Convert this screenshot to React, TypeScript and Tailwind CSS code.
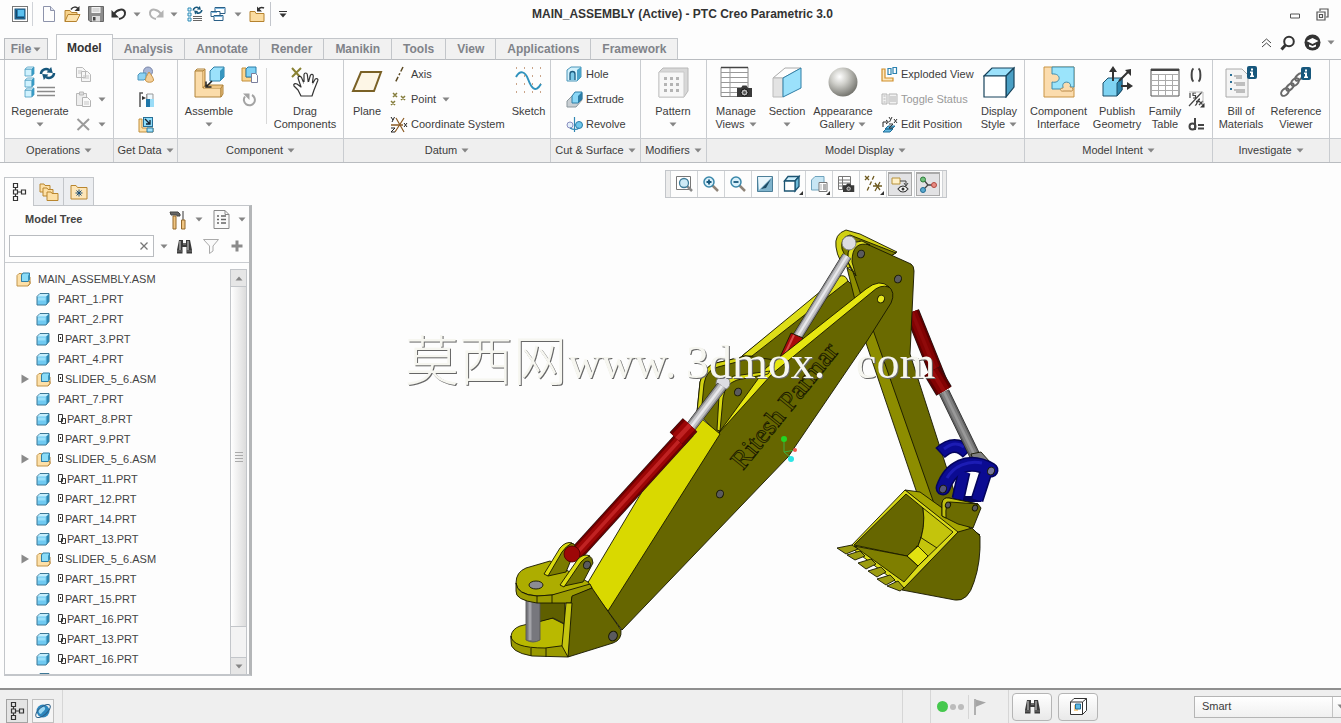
import type { ReactNode } from "react";
import { clsx } from "clsx";

type IconProps = { w?: number; h?: number; children: ReactNode };

function Icon({ w = 16, h, children }: IconProps) {
  const height = h ?? w;
  return (
    <svg width={w} height={height} viewBox={`0 0 ${w} ${height}`} fill="none" className="shrink-0" aria-hidden="true">
      {children}
    </svg>
  );
}

function Caret({ dark = false }: { dark?: boolean }) {
  return (
    <svg width="8" height="5" viewBox="0 0 8 5" className={clsx("shrink-0", dark ? "text-[#333]" : "text-[#858585]")} aria-hidden="true">
      <path d="M0.5 0.5h7L4 4.5z" fill="currentColor" />
    </svg>
  );
}

/* ---------- shared glyph parts ---------- */

function Cube({ x = 0, y = 0, s = 10 }: { x?: number; y?: number; s?: number }) {
  const d = s * 0.25;
  return (
    <g transform={`translate(${x} ${y})`} stroke="#4a9cc0" strokeWidth="0.8" strokeLinejoin="round">
      <path d={`M0 ${d}L${d} 0H${s}L${s - d} ${d}z`} fill="#e4f8ff" />
      <path d={`M${s} 0V${s - d}L${s - d} ${s}V${d}z`} fill="#2f9ac8" />
      <path d={`M0 ${d}H${s - d}V${s}H0z`} fill="#d0f2fe" />
    </g>
  );
}

const partIcon = (
  <Icon w={14}>
    <path d="M1 4.500L4 1.500h9v8l-3 3.500H1z" fill="#6fc9f1" stroke="#3d7896" />
    <path d="M1.500 4.500L4 2h8.500l-2.500 2.500z" fill="#c3edfc" />
    <path d="M10.500 4.500L13 2v7.300l-2.500 3z" fill="#2f87b0" />
    <path d="M2 5.500h7.500v3H2z" fill="#9be0fa" />
  </Icon>
);

const asmIcon = (
  <Icon w={15}>
    <path d="M1 3.500L3 1.500h2.500v8h8.500v2l-2 2.500H1z" fill="#fde0a8" stroke="#c1954c" />
    <path d="M12 14l2-2.500V5" stroke="#b98a3c" />
    <path d="M5.500 3L7 1h6.500v6.500L12 9.500H5.500z" fill="#8adcf8" stroke="#2f7ea6" />
    <path d="M12 3.500l1.500-2V7.500L12 9z" fill="#3a93bb" />
  </Icon>
);

const arrowsGlyph = (
  <g stroke="#17577c" strokeWidth="2.500">
    <path d="M2 7a5 5 0 0 1 8-4" />
    <path d="M15 6a5 5 0 0 1-8 4" />
    <path d="M10 0v7l5-3.500z" fill="#17577c" stroke="none" transform="rotate(40 11 3)" />
    <path d="M7 6v7l-5-3.500z" fill="#17577c" stroke="none" transform="rotate(40 6 10)" />
  </g>
);

const infoGlyph = (
  <g>
    <rect width="10" height="13" rx="2" fill="#17577c" />
    <path d="M4 2.500h2v2H4zM3 5.500h3v4h1v1.500H3V9.500h1V7H3z" fill="#fff" />
  </g>
);

const binoculars = (
  <Icon w={17}>
    <path d="M3 2h4v3h3V2h4l1 5 1 5v3.500h-5.500V9h-4v6.500H1V12l1-5z" fill="#3b3b3b" />
    <path d="M4 3v9M12 3v9" stroke="#a5a5a5" strokeWidth="1.500" />
    <path d="M7 6h3" stroke="#999" />
    <path d="M1 13h5.500M10.500 13H16" stroke="#777" />
  </Icon>
);

const treeGlyph = (
  <Icon w={16} h={20}>
    <path d="M2.500 1.500h4v4h-4zM2.500 8h4v4h-4zM2.500 14.500h4v4h-4zM10.500 8h4v4h-4zM4.500 5.500V8M4.500 12v2.500M6.500 10h4" stroke="#333" strokeWidth="1.200" />
  </Icon>
);

/* ---------- quick access icons ---------- */

const windowIcon = (
  <Icon w={16}>
    <rect x="0.500" y="0.500" width="15" height="15" fill="#fff" stroke="#777" />
    <rect x="3" y="3" width="10" height="10" fill="#2b8fc9" stroke="#1b4f73" />
    <path d="M6 4h6v6H6z" fill="#5cc0ee" />
    <path d="M4.500 4v7.500H12" stroke="#17496b" strokeWidth="1.500" />
  </Icon>
);
const newIcon = (
  <Icon w={16}>
    <path d="M2.500 0.500h7l4 4v11h-11z" fill="#fdfdfd" stroke="#8d93ab" />
    <path d="M9.500 0.500v4h4" fill="#dde1ee" stroke="#8d93ab" />
  </Icon>
);
const openIcon = (
  <Icon w={17}>
    <path d="M1 15.500V4.500h5l1.500 2H13v2" fill="#f7d28b" stroke="#b5822e" />
    <path d="M1 15.500L4 8.500h12l-3.500 7z" fill="#fde3ae" stroke="#b5822e" />
    <path d="M7 3.500c2-3 5-3 7-1" stroke="#333" strokeWidth="1.500" />
    <path d="M15.500 0v5h-5z" fill="#333" />
  </Icon>
);
const saveIcon = (
  <Icon w={16}>
    <path d="M0.500 0.500h15v15H2l-1.500-1.500z" fill="#8d8d8d" stroke="#666" />
    <rect x="3.500" y="1" width="9" height="6" fill="#f4f4f4" />
    <path d="M4.500 3h7M4.500 5h7" stroke="#bbb" />
    <rect x="4" y="10" width="8" height="5.500" fill="#ddd" />
    <rect x="5" y="11" width="2.500" height="3.500" fill="#444" />
  </Icon>
);
const undoIcon = (
  <Icon w={16}>
    <path d="M3 8c3-5 10-6 11-1.500 .5 3.500-2.500 6-6 6.500" stroke="#333" strokeWidth="2" />
    <path d="M0.500 4v7.500H8z" fill="#333" />
  </Icon>
);
const redoIcon = (
  <Icon w={16}>
    <path d="M13 8C10 3 3 2 2 6.500 1.500 10 4.500 12.500 8 13" stroke="#b3b3b3" strokeWidth="2" />
    <path d="M15.500 4v7.500H8z" fill="#b3b3b3" />
  </Icon>
);
const regenSmall = (
  <Icon w={16}>
    <path d="M1 2h3v3H1zM1 7h3v3H1zM1 12h3v3H1z" fill="#d7f3fe" stroke="#2f8ab5" />
    <g transform="translate(5 0) scale(.65)">{arrowsGlyph}</g>
    <path d="M6 10.500h9M6 12.500h9M6 14.500h9" stroke="#666" />
  </Icon>
);
const windowsIcon = (
  <Icon w={16}>
    <path d="M5 1.500h10v6H5z" fill="#fff" stroke="#2b5f86" />
    <path d="M1 5.500h9v5H1zM4 9.500h9v5H4z" fill="#fff" stroke="#2b5f86" />
    <path d="M5 2.500h10M4 10.500h9M1 6.500h6" stroke="#7fb6dc" />
  </Icon>
);
const closeFolder = (
  <Icon w={17}>
    <path d="M1 15.500V5.500h5l1 2h8v8z" fill="#fbdca0" stroke="#b5822e" />
    <path d="M9 3.500c2-2.500 4-2.500 6-1.500" stroke="#333" strokeWidth="1.500" />
    <path d="M8 0.500v5h5z" fill="#333" />
  </Icon>
);

/* ---------- ribbon icons ---------- */

const regenerateIcon = (
  <Icon w={32}>
    <Cube x={1} y={1} s={9} />
    <Cube x={1} y={12} s={9} />
    <Cube x={1} y={22} s={9} />
    <g transform="translate(15 1)">{arrowsGlyph}</g>
    <path d="M13 21.500h18M13 25.500h18M13 29.500h18" stroke="#8a8a8a" strokeWidth="1.500" />
  </Icon>
);
const copyIcon = (
  <Icon w={17}>
    <path d="M1.500 1.500h6l3 3v7h-9zM6.500 5.500h6l3 3v7h-9z" fill="#f7f7f7" stroke="#b9b9b9" />
    <path d="M8 10h6M8 12h6M3 5h4M3 7h3" stroke="#c5c5c5" />
  </Icon>
);
const pasteIcon = (
  <Icon w={17}>
    <path d="M1.500 2.500h10v12h-10z" fill="#eee" stroke="#b9b9b9" />
    <path d="M4.500 1h4v3h-4z" fill="#ddd" stroke="#b9b9b9" />
    <path d="M7.500 6.500h5l3 3v6h-8z" fill="#fafafa" stroke="#b3b3b3" />
    <path d="M9 11h5M9 13h5" stroke="#c5c5c5" />
  </Icon>
);
const deleteIcon = (
  <Icon w={17}>
    <path d="M2.500 3L14 14M14 3L2.500 14" stroke="#9b9b9b" strokeWidth="2" />
  </Icon>
);
const mergeIcon = (
  <Icon w={18}>
    <circle cx="11" cy="5.500" r="4.500" fill="#a9b6d6" stroke="#7a86a8" />
    <path d="M1 9l2-2h6v5l-2 2H1z" fill="#8ed2f2" stroke="#4f97bd" />
    <path d="M12 6c3 4 4.500 6 4.500 8 0 3-8 3-8 0C8.500 12 10 9 12 6z" fill="#f5cf98" stroke="#c79548" />
  </Icon>
);
const importIcon = (
  <Icon w={18}>
    <path d="M3 16V2h3" stroke="#555" strokeWidth="1.500" />
    <path d="M5 5l4 2-4 2z" fill="#333" />
    <path d="M10 3v9" stroke="#333" />
    <path d="M10 3h6v6h-6z" fill="#eef9fe" stroke="#999" />
    <path d="M9 8h5v8H9z" fill="#1f76a8" />
    <path d="M13 8h4v8h-4z" fill="#9adcf7" />
  </Icon>
);
const shrinkIcon = (
  <Icon w={18}>
    <path d="M2 3h3v9h11v4H2z" fill="#fde0a8" stroke="#c18e3a" />
    <rect x="6.500" y="1.500" width="9" height="9" fill="#8fdcf9" stroke="#276f97" />
    <path d="M8 3l5 5M13 4v4H9" stroke="#123" strokeWidth="1.300" />
    <path d="M10 12h6v4h-6z" fill="#a3e3fb" stroke="#2a7da8" />
  </Icon>
);
const assembleIcon = (
  <Icon w={32}>
    <path d="M2 5l2-2h8l-2 2z" fill="#fdeac8" stroke="#b0843c" />
    <path d="M2 5h8v17h18v9H2z" fill="#fbdcaa" stroke="#b0843c" />
    <path d="M10 5l2-2v16l-2 3M10 22l3-3h17l-2 3M30 19v9l-2 3V22" fill="#efc685" stroke="#b0843c" />
    <path d="M17 5l4-4h10v10l-4 4H17z" fill="#9be1fb" stroke="#2f7ea6" />
    <path d="M27 5l4-4v10l-4 4z" fill="#3796bf" />
    <path d="M19 15l-5 5M13 15.500V21h5.500" stroke="#222" strokeWidth="1.500" />
  </Icon>
);
const createIcon = (
  <Icon w={17}>
    <path d="M1 2h4v9h6v4H1z" fill="#fbd58f" stroke="#c18e3a" />
    <path d="M5 3l2-2h8v8l-2 2H5z" fill="#7fd2f5" stroke="#2a7da8" />
    <path d="M10.500 7.500h4l2 2v7h-6z" fill="#fff" stroke="#7b7f9c" />
  </Icon>
);
const repeatIcon = (
  <Icon w={15}>
    <path d="M3 4.500A5.500 5.500 0 1 0 10 3" stroke="#a3a3a3" strokeWidth="2" />
    <path d="M1 1.500h6.500V8z" fill="#a3a3a3" />
  </Icon>
);
const dragIcon = (
  <Icon w={32}>
    <path d="M3 2l9 10M12 2L3 11" stroke="#8a8233" strokeWidth="2" />
    <path d="M12 30l-3-6-4-4c-1-2 1-3 3-2l4 3-3-9c0-2 2.500-2 3.500-.5l2.500 6V8.500c.3-2 3-2 3.300 0l1 8 2-7c.8-2 3-1 3 .5l-1 8 3-5c1.500-1 3 0 2.500 1.500L25 24l-2 6z" fill="#fff" stroke="#333" strokeWidth="1.200" strokeLinejoin="round" />
    <path d="M15.500 16v3M19.300 16v3M23 17l-1 3" stroke="#fff" strokeWidth="2" />
  </Icon>
);
const planeIcon = (
  <Icon w={32}>
    <path d="M10 6h20l-7 19H2z" fill="#fdf6e6" stroke="#7a6126" strokeWidth="2" />
  </Icon>
);
const axisIcon = (
  <Icon w={18}>
    <path d="M13 1L5 17" stroke="#5c4a24" strokeWidth="1.500" strokeDasharray="5 2 2 2" />
  </Icon>
);
const pointIcon = (
  <Icon w={18}>
    <path d="M3 2l4 4M7 2L3 6M11 5l4 4M15 5l-4 4M1 10l4 4M5 10l-4 4" stroke="#857d3c" strokeWidth="1.500" />
  </Icon>
);
const csysIcon = (
  <Icon w={18}>
    <path d="M6 2l8 14M14 2L5 16" stroke="#8b5a22" strokeWidth="1.200" />
    <path d="M1 9h12" stroke="#8b5a22" strokeWidth="1.500" />
    <path d="M1 1l2 3M4.500 1L2 6M1 12h4l-4 4h4M14 7l3 4M17 7l-3 4" stroke="#222" />
  </Icon>
);
const sketchIcon = (
  <Icon w={32}>
    <path d="M3 2h27M3 10h27M3 18h27M3 26h27" stroke="#b98763" strokeWidth="1.500" strokeDasharray="1 7" />
    <path d="M3 11C7 4 12 5 15 13s7 15 13 5" stroke="#2f92bd" strokeWidth="2" />
  </Icon>
);
const holeIcon = (
  <Icon w={17}>
    <path d="M1 4l4-3h10v10l-4 4H1z" fill="#d3f1fc" stroke="#4a95b8" />
    <path d="M11 4l4-3v10l-4 4z" fill="#4ba3c8" />
    <path d="M4 14V8a2.500 2.500 0 0 1 5 0v6" fill="#7cc9e8" stroke="#1d5c80" strokeWidth="1.300" />
  </Icon>
);
const extrudeIcon = (
  <Icon w={17}>
    <path d="M1 16v-6l8-8h7v7l-6 7z" fill="#c9cfd3" stroke="#8b979d" />
    <path d="M6 5l3-4h7v7l-4 4H6z" fill="#8ad7f6" stroke="#2f7ea6" />
    <path d="M12 5l4-4v7l-4 4z" fill="#2d7da6" />
  </Icon>
);
const revolveIcon = (
  <Icon w={17}>
    <ellipse cx="4" cy="9" rx="3" ry="3" fill="#e3effa" stroke="#8a8fc0" />
    <ellipse cx="13" cy="9" rx="3.500" ry="3.500" fill="#6fc6ea" stroke="#2a7da8" />
    <path d="M8.500 1v15M4 12c3 2 7 2 9 0" stroke="#2f86b3" strokeWidth="1.200" />
  </Icon>
);
const patternIcon = (
  <Icon w={32}>
    <path d="M2 6l4-4h25v23l-4 6H2z" fill="#d8d8d8" stroke="#b8b8b8" />
    <path d="M2 6h25v25H2z" fill="#f7f7f7" stroke="#c9c9c9" />
    <path d="M7 11h3v3H7zM13 11h3v3h-3zM19 11h3v3h-3zM7 17h3v3H7zM13 17h3v3h-3zM19 17h3v3h-3zM7 23h3v3H7zM13 23h3v3h-3zM19 23h3v3h-3z" fill="#b4b4b4" />
  </Icon>
);
const cameraGlyph = (
  <g>
    <path d="M0 3h4l1.500-2.500h4L11 3h4v9H0z" fill="#3a3a3a" />
    <circle cx="7.500" cy="7.500" r="3.500" fill="#bbb" stroke="#111" />
    <circle cx="7.500" cy="7.500" r="1.500" fill="#555" />
  </g>
);
const manageViewsIcon = (
  <Icon w={34} h={32}>
    <path d="M2 1.500h27v29H2z" fill="#fff" stroke="#888" />
    <path d="M2 6.500h27M2 11.500h27M2 16.500h27M2 21.500h27M2 26.500h27M11 1v29" stroke="#999" />
    <path d="M2 1.500h27" stroke="#444" strokeWidth="1.500" />
    <g transform="translate(18 19)">{cameraGlyph}</g>
  </Icon>
);
const sectionIcon = (
  <Icon w={32}>
    <path d="M2 12L14 2h16L12 12z" fill="#fdfdfd" stroke="#aaa" />
    <path d="M2 12h10v19H2z" fill="#e3e3e3" stroke="#bbb" />
    <path d="M12 12L30 2v20L12 31z" fill="#9be1fb" stroke="#2f7ea6" />
  </Icon>
);
const sphereIcon = (
  <Icon w={32}>
    <defs>
      <radialGradient id="ball" cx=".38" cy=".32" r=".7">
        <stop offset="0" stopColor="#fff" />
        <stop offset=".4" stopColor="#cfcfca" />
        <stop offset="1" stopColor="#74746e" />
      </radialGradient>
    </defs>
    <circle cx="16" cy="16" r="14.500" fill="url(#ball)" />
  </Icon>
);
const explodedIcon = (
  <Icon w={17}>
    <path d="M1 3h3v9h8v3H1z" fill="#fde6bb" stroke="#cf8f2d" strokeWidth="1.200" />
    <path d="M7 2.500h3v6H7zM12 1.500h3.500v6H12z" fill="#fff" stroke="#2b82b0" strokeWidth="1.200" />
  </Icon>
);
const toggleIcon = (
  <Icon w={17}>
    <path d="M1 3h5v10H1zM8 3h8v10H8z" fill="#f1f1f1" stroke="#b5b5b5" />
    <path d="M2.500 5h2M2.500 8h2M2.500 11h2M10 5v6M12 5v6M14 5v6" stroke="#b5b5b5" />
  </Icon>
);
const editPosIcon = (
  <Icon w={17}>
    <path d="M4 13l3-3h7l-3 3zM2 16l3-3h7l-3 3z" fill="#65b7de" stroke="#1f6f9a" />
    <path d="M2 11V6h4M5 4l2.500 2L5 8" stroke="#222" />
    <path d="M8 1l1.500 2.500M11 1L8.500 6M13 3l3 4M16 3l-3 4M8 8h4l-4 4h4" stroke="#333" />
  </Icon>
);
const displayIcon = (
  <Icon w={32}>
    <path d="M1 10l8-8h22l-8 8z" fill="#9be1fb" stroke="#17435c" strokeWidth="1.200" />
    <path d="M31 2v19l-8 10V10z" fill="#4a9fc4" stroke="#17435c" strokeWidth="1.200" />
    <path d="M1 10h22v21H1z" fill="#fff" stroke="#17435c" strokeWidth="1.200" />
  </Icon>
);
const interfaceIcon = (
  <Icon w={32}>
    <path d="M1 1h30v30H1z" fill="#fbdcae" stroke="#c99444" />
    <path d="M9 1h22v20h-4c3-6-9-7-7 0v2h-11v-7c9 2 10-9 0-8z" fill="#9be4fb" stroke="#3f8cae" />
    <path d="M20 22c-4 0-3 4 1 3h6c4 1 4-4 0-4" fill="#fbdcae" stroke="#b98a4a" />
  </Icon>
);
const publishIcon = (
  <Icon w={32}>
    <path d="M2 17l5-5h14v12l-5 6H2z" fill="#7fd3f2" stroke="#1c4f6b" />
    <path d="M16 17l5-5v12l-5 6z" fill="#2f86ad" stroke="#1c4f6b" />
    <path d="M12 15V4M18 15l9-9M20 20h9" stroke="#333" strokeWidth="2" />
    <path d="M12 0l4 6H8zM30 3v7l-6-6zM32 20l-6 4v-8z" fill="#333" />
  </Icon>
);
const familyIcon = (
  <Icon w={32}>
    <path d="M2 3h28v27H2z" fill="#fff" stroke="#555" />
    <path d="M2 4h28" stroke="#444" strokeWidth="2" />
    <path d="M2 8.500h28M2 14.500h28M2 19.500h28M2 24.500h28M9.500 8v22M16.500 8v22M23.500 8v22" stroke="#aaa" />
  </Icon>
);
const parensIcon = (
  <Icon w={16}>
    <path d="M5.500 1.500C3 3 3 13 5.500 14.500M10.500 1.500C13 3 13 13 10.500 14.500" stroke="#444" strokeWidth="2" />
  </Icon>
);
const paramsIcon = (
  <Icon w={17}>
    <path d="M2 2v5M5 7h2.500V4.500H5V2h3M1 15L14 1" stroke="#444" strokeWidth="1.200" />
    <path d="M7 14c2 1 2-6 5-6M8 10.500h4M11 10l4 4M15 10l-4 4" stroke="#444" strokeWidth="1.300" />
    <path d="M1 1h14v13" stroke="#bbb" />
    <path d="M16.500 12v4.500H12z" fill="#333" />
  </Icon>
);
const relationIcon = (
  <Icon w={17}>
    <path d="M7 2v12" stroke="#444" strokeWidth="2" />
    <circle cx="4.500" cy="10.500" r="3" stroke="#444" strokeWidth="2" />
    <path d="M10 9h6M10 12.500h6" stroke="#444" strokeWidth="2" />
  </Icon>
);
const bomIcon = (
  <Icon w={32}>
    <path d="M1 3h16l6 6v22H1z" fill="#f4f4f4" stroke="#aaa" />
    <path d="M9 10h8M9 17h11M9 24h11M11 12h6M11 19h9M11 26h9" stroke="#888" />
    <path d="M5 8h2v2H5zM5 15h2v2H5zM5 22h2v2H5z" fill="#2b6f96" />
    <g transform="translate(22 0)">{infoGlyph}</g>
  </Icon>
);
const chainIcon = (
  <Icon w={32}>
    <g stroke="#6a6a6a" strokeWidth="2">
      <ellipse cx="5" cy="26" rx="3" ry="4.500" transform="rotate(45 5 26)" />
      <ellipse cx="10" cy="21" rx="2.500" ry="4.500" transform="rotate(45 10 21)" />
      <ellipse cx="15" cy="16" rx="3" ry="4.500" transform="rotate(45 15 16)" />
      <ellipse cx="19" cy="11" rx="2.500" ry="4.500" transform="rotate(45 19 11)" />
    </g>
    <g transform="translate(21 1)">{infoGlyph}</g>
  </Icon>
);

/* ---------- graphics toolbar icons ---------- */

const lens = (mark: ReactNode) => (
  <Icon w={18}>
    <path d="M10 10l6 6" stroke="#8f8478" strokeWidth="2.500" />
    <circle cx="7" cy="7" r="5" fill="#d8f0fa" stroke="#3a87aa" strokeWidth="1.500" />
    {mark}
  </Icon>
);
const refitIcon = (
  <Icon w={18}>
    <path d="M1.500 1.500h14v13h-14z" fill="#fff" stroke="#777" />
    <path d="M12 11l5 5" stroke="#8a8a8a" strokeWidth="2.500" />
    <circle cx="9" cy="8" r="4.500" fill="#cdeaf6" stroke="#3f7c99" strokeWidth="1.300" />
  </Icon>
);
const repaintIcon = (
  <Icon w={18}>
    <path d="M1.500 1.500h15v15h-15z" fill="#7fb3cc" stroke="#4c7f99" />
    <path d="M2 2h14L3 15z" fill="#e8f5fb" />
    <path d="M5 14L15 4l-5 9z" fill="#1d4c66" />
  </Icon>
);
const corner = <path d="M18 14v4h-4z" fill="#333" />;
const styleIcon = (
  <Icon w={18}>
    <path d="M1.500 6L5 1.500h11L12 6z" fill="#cdeefb" stroke="#1d5573" strokeWidth="1.300" />
    <path d="M12 6l4-4.500v10L12 16z" fill="#6cb9d8" stroke="#1d5573" strokeWidth="1.300" />
    <path d="M1.500 6H12v10H1.500z" fill="#fff" stroke="#1d5573" strokeWidth="1.300" />
  </Icon>
);
const savedIcon = (
  <Icon w={18}>
    <path d="M1.500 5L5 1.500h9V12l-3 3H1.500z" fill="#c7e6f4" stroke="#6fa3bd" />
    <path d="M9 7.500h8v9H9z" fill="#fff" stroke="#777" />
    <path d="M10.500 10h1M13 10h3M10.500 12h1M13 12h3M10.500 14h1M13 14h3" stroke="#666" />
  </Icon>
);
const viewMgrIcon = (
  <Icon w={18}>
    <path d="M1.500 1.500h12v13h-12zM1.500 5h12M1.500 8h12M1.500 11h12M5.500 2v12" stroke="#777" fill="#fff" />
    <g transform="translate(6 8) scale(.75)">{cameraGlyph}</g>
  </Icon>
);
const datumIcon = (
  <Icon w={18}>
    <path d="M1 1l4 4M5 1L1 5M11 8l5 7M16 7l-5 9M9 11h9" stroke="#6e5a20" strokeWidth="1.300" />
    <path d="M10 1L3 16" stroke="#6e5a20" strokeWidth="1.300" strokeDasharray="4 2" />
  </Icon>
);
const annotIcon = (
  <Icon w={18}>
    <path d="M1 2h8v6H1z" fill="#fff0c8" stroke="#b7923d" />
    <path d="M9 5h6v4M13 7l2 3 2-3" stroke="#444" />
    <path d="M7 13c3-4 7-4 10 0-3 4-7 4-10 0z" fill="#fff" stroke="#333" strokeWidth="1.200" />
    <circle cx="12" cy="13" r="1.500" fill="#333" />
  </Icon>
);
const spinIcon = (
  <Icon w={18}>
    <path d="M4 3l5 6-5 5M9 9h6" stroke="#444" strokeWidth="1.300" />
    <circle cx="4" cy="3.500" r="2.500" fill="#72c17c" stroke="#2d7c3a" />
    <circle cx="4" cy="14" r="2.500" fill="#5aaad0" stroke="#226b92" />
    <circle cx="15" cy="9" r="2.500" fill="#e88b83" stroke="#b04840" />
  </Icon>
);

/* ---------- ribbon ---------- */

type BigProps = { icon: ReactNode; lines: string[]; width: string; drop?: "inline" | "below" };

function BigButton({ icon, lines, width, drop }: BigProps) {
  const last = lines.length - 1;
  return (
    <button className={clsx("flex shrink-0 flex-col items-center pt-1.5 leading-[13px]", width)}>
      {icon}
      <span className="mt-[7px] flex flex-col items-center whitespace-nowrap">
        {lines.map((line, i) => (
          <span key={line} className="flex items-center gap-1">
            {line}
            {drop === "inline" && i === last && <Caret />}
          </span>
        ))}
      </span>
      {drop === "below" && (
        <span className="mt-1">
          <Caret />
        </span>
      )}
    </button>
  );
}

function Row({ icon, label, drop, off, name }: { icon: ReactNode; label?: string; drop?: boolean; off?: boolean; name?: string }) {
  return (
    <button aria-label={label ? undefined : name} className={clsx("flex h-[25px] items-center whitespace-nowrap", off && "text-[#9a9a9a]")}>
      {icon}
      {label && <span className="ml-[3px]">{label}</span>}
      {drop && (
        <span className="ml-1.5">
          <Caret />
        </span>
      )}
    </button>
  );
}

function Group({ title, width, children }: { title: string; width: string; children: ReactNode }) {
  return (
    <section className={clsx("flex shrink-0 flex-col border-r border-[#c9ccd0]", width)}>
      <div className="flex h-[78px]">{children}</div>
      <button className="flex h-6 items-center justify-center gap-1 border-t border-[#c9ccd0] bg-[#efefef] whitespace-nowrap">
        {title}
        <Caret />
      </button>
    </section>
  );
}

const TABS = ["Model", "Analysis", "Annotate", "Render", "Manikin", "Tools", "View", "Applications", "Framework"];

function Ribbon() {
  return (
    <div className="flex border-y border-[#b9bcc0]">
      <div className="ml-1 w-px shrink-0 bg-[#c9ccd0]" />
      <Group title="Operations" width="w-[109px]">
        <BigButton icon={regenerateIcon} lines={["Regenerate"]} width="w-[70px]" drop="below" />
        <div className="flex flex-col pt-0.5">
          <Row icon={copyIcon} name="Copy" />
          <Row icon={pasteIcon} name="Paste" drop />
          <Row icon={deleteIcon} name="Delete" drop />
        </div>
      </Group>
      <Group title="Get Data" width="w-16">
        <div className="flex w-full flex-col items-center pt-0.5">
          <Row icon={mergeIcon} name="User-Defined Feature" />
          <Row icon={importIcon} name="Copy Geometry" />
          <Row icon={shrinkIcon} name="Shrinkwrap" />
        </div>
      </Group>
      <Group title="Component" width="w-[166px]">
        <BigButton icon={assembleIcon} lines={["Assemble"]} width="w-[62px]" drop="below" />
        <div className="flex w-[18px] flex-col items-center pt-0.5">
          <Row icon={createIcon} name="Create" />
          <Row icon={repeatIcon} name="Repeat" />
        </div>
        <div className="mt-2 ml-2 h-14 w-px bg-[#d8d8d8]" />
        <BigButton icon={dragIcon} lines={["Drag", "Components"]} width="w-[76px]" />
      </Group>
      <Group title="Datum" width="w-[207px]">
        <BigButton icon={planeIcon} lines={["Plane"]} width="w-[46px]" />
        <div className="flex flex-1 flex-col pt-0.5">
          <Row icon={axisIcon} label="Axis" />
          <Row icon={pointIcon} label="Point" drop />
          <Row icon={csysIcon} label="Coordinate System" />
        </div>
        <BigButton icon={sketchIcon} lines={["Sketch"]} width="w-[48px]" />
      </Group>
      <Group title="Cut & Surface" width="w-[90px]">
        <div className="flex flex-col pt-0.5 pl-[15px]">
          <Row icon={holeIcon} label="Hole" />
          <Row icon={extrudeIcon} label="Extrude" />
          <Row icon={revolveIcon} label="Revolve" />
        </div>
      </Group>
      <Group title="Modifiers" width="w-[66px]">
        <BigButton icon={patternIcon} lines={["Pattern"]} width="w-16" drop="below" />
      </Group>
      <Group title="Model Display" width="w-[318px]">
        <BigButton icon={manageViewsIcon} lines={["Manage", "Views"]} width="w-[58px]" drop="inline" />
        <BigButton icon={sectionIcon} lines={["Section"]} width="w-[44px]" drop="below" />
        <BigButton icon={sphereIcon} lines={["Appearance", "Gallery"]} width="w-[68px]" drop="inline" />
        <div className="flex flex-1 flex-col pt-0.5 pl-1">
          <Row icon={explodedIcon} label="Exploded View" />
          <Row icon={toggleIcon} label="Toggle Status" off />
          <Row icon={editPosIcon} label="Edit Position" />
        </div>
        <BigButton icon={displayIcon} lines={["Display", "Style"]} width="w-[50px]" drop="inline" />
      </Group>
      <Group title="Model Intent" width="w-[188px]">
        <BigButton icon={interfaceIcon} lines={["Component", "Interface"]} width="w-[67px]" />
        <BigButton icon={publishIcon} lines={["Publish", "Geometry"]} width="w-[50px]" />
        <BigButton icon={familyIcon} lines={["Family", "Table"]} width="w-[46px]" />
        <div className="flex flex-col pt-0.5">
          <Row icon={parensIcon} name="Switch Dimensions" />
          <Row icon={paramsIcon} name="Parameters" />
          <Row icon={relationIcon} name="Relations" />
        </div>
      </Group>
      <Group title="Investigate" width="w-[117px]">
        <BigButton icon={bomIcon} lines={["Bill of", "Materials"]} width="w-14" />
        <BigButton icon={chainIcon} lines={["Reference", "Viewer"]} width="w-[54px]" />
      </Group>
      <div className="flex flex-1 flex-col">
        <div className="h-[78px]" />
        <div className="h-6 border-t border-[#c9ccd0] bg-[#efefef]" />
      </div>
    </div>
  );
}

function Header() {
  return (
    <header>
      <div className="grid h-[34px] grid-cols-[1fr_auto_1fr] items-start">
        <div className="flex h-7 items-center pl-3">
          <button aria-label="Window">{windowIcon}</button>
          <span className="mx-1 h-6 w-px bg-[#d0d3d8]" />
          <div className="flex items-center gap-[7px] pl-1">
            <button aria-label="New">{newIcon}</button>
            <button aria-label="Open">{openIcon}</button>
            <button aria-label="Save">{saveIcon}</button>
            <button aria-label="Undo" className="flex items-center gap-1.5">{undoIcon}<Caret /></button>
            <button aria-label="Redo" className="flex items-center gap-1.5">{redoIcon}<Caret /></button>
            <button aria-label="Regenerate" className="ml-0.5">{regenSmall}</button>
            <button aria-label="Windows" className="flex items-center gap-2">{windowsIcon}<Caret /></button>
            <button aria-label="Close">{closeFolder}</button>
          </div>
          <span className="mx-1 h-6 w-px bg-[#c3c6cc]" />
          <button aria-label="Customize Quick Access Toolbar" className="ml-1 flex flex-col items-center gap-px">
            <span className="h-px w-2 bg-[#333]" />
            <Caret dark />
          </button>
        </div>
        <h1 className="pl-6 text-[12px] leading-7 font-bold whitespace-nowrap text-[#333]">MAIN_ASSEMBLY (Active) - PTC Creo Parametric 3.0</h1>
        <div className="flex h-7 items-center justify-end gap-4 pr-3">
          <button aria-label="Minimize" className="pt-1">
            <Icon w={10} h={6}>
              <path d="M0.500 1h9v4h-9z" stroke="#555" />
            </Icon>
          </button>
          <button aria-label="Restore">
            <Icon w={13}>
              <path d="M4 3V1h8v8h-2M1 4h8v8H1zM3.500 6.500h3v3h-3z" stroke="#555" strokeWidth="1.200" />
            </Icon>
          </button>
        </div>
      </div>
      <div className="relative z-10 -mb-px flex h-[26px] items-end text-[12px] font-bold text-[#808389]">
        <button className="ml-1 flex h-[22px] w-11 items-center justify-center gap-0.5 border border-[#b9bcc0] bg-[#efefef]">
          File
          <Caret />
        </button>
        <nav className="ml-2 flex items-end">
          {TABS.map((tab) => (
            <button
              key={tab}
              className={clsx(
                "border-[#c3c6ca] whitespace-nowrap",
                tab === "Model"
                  ? "h-[26px] border-x border-t bg-[#fdfdfd] px-2.5 text-[#333]"
                  : "h-[22px] border-t border-r border-b border-b-[#b9bcc0] bg-[#f1f1f1] px-[11px]",
              )}
            >
              {tab}
            </button>
          ))}
        </nav>
        <div className="ml-auto flex items-center gap-2 self-start pr-1.5">
          <button aria-label="Collapse ribbon">
            <Icon w={11} h={10}>
              <path d="M1 5l4.500-4L10 5M1 9l4.500-4L10 9" stroke="#444" />
            </Icon>
          </button>
          <button aria-label="Search">
            <Icon w={16}>
              <circle cx="9" cy="6.500" r="4.800" stroke="#333" strokeWidth="2" />
              <path d="M5.500 10L1.500 14.500" stroke="#333" strokeWidth="3" />
            </Icon>
          </button>
          <button aria-label="Help" className="flex items-center gap-1.5">
            <Icon w={17}>
              <circle cx="8.500" cy="8.500" r="8" fill="#333" />
              <path d="M2.500 7l6-3 6 3-6 3zM5 10.500v2c2 1.500 5 1.500 7 0v-2L8.500 12z" fill="#fff" />
            </Icon>
            <Caret />
          </button>
        </div>
      </div>
      <Ribbon />
    </header>
  );
}

/* ---------- model tree ---------- */

type Mark = "dot" | "link";
const TREE: { label: string; mark?: Mark; asm?: boolean }[] = [
  { label: "PART_1.PRT" },
  { label: "PART_2.PRT" },
  { label: "PART_3.PRT", mark: "dot" },
  { label: "PART_4.PRT" },
  { label: "SLIDER_5_6.ASM", mark: "dot", asm: true },
  { label: "PART_7.PRT" },
  { label: "PART_8.PRT", mark: "link" },
  { label: "PART_9.PRT", mark: "dot" },
  { label: "SLIDER_5_6.ASM", mark: "dot", asm: true },
  { label: "PART_11.PRT", mark: "link" },
  { label: "PART_12.PRT", mark: "dot" },
  { label: "PART_14.PRT", mark: "dot" },
  { label: "PART_13.PRT", mark: "link" },
  { label: "SLIDER_5_6.ASM", mark: "dot", asm: true },
  { label: "PART_15.PRT", mark: "dot" },
  { label: "PART_15.PRT", mark: "dot" },
  { label: "PART_16.PRT", mark: "link" },
  { label: "PART_13.PRT", mark: "link" },
  { label: "PART_16.PRT", mark: "link" },
  { label: "" },
];

function MarkIcon({ mark }: { mark: Mark }) {
  if (mark === "dot") {
    return (
      <Icon w={7} h={11}>
        <path d="M0.500 0.500h4v7h-4z" stroke="#333" />
        <path d="M2 3h1v2H2z" fill="#333" />
      </Icon>
    );
  }
  return (
    <Icon w={9} h={11}>
      <path d="M0.500 0.500h4v7h-4zM3.500 4.500h4v5h-4z" fill="#fdfdfd" stroke="#333" />
    </Icon>
  );
}

function ModelTree() {
  return (
    <aside className="ml-1 flex w-[248px] shrink-0 flex-col pt-3.5 pb-3">
      <div className="relative z-10 -mb-px flex">
        <button aria-label="Model Tree" className="flex h-[29px] w-[30px] items-center justify-center border-x border-t border-[#c3c6ca] bg-[#fdfdfd]">{treeGlyph}</button>
        <button aria-label="Folder Browser" className="flex h-[29px] w-[30px] items-center justify-center border-y border-r border-[#c3c6ca] bg-[#eceef1]">
          <Icon w={20}>
            <g fill="#fde0a6" stroke="#b9862f">
              <path d="M1 10V2h4l1 1.500h5V10z" />
              <path d="M4 14V6h4l1 1.500h5V14z" />
              <path d="M8 18.500V10h4l1 1.500h6v7z" />
            </g>
          </Icon>
        </button>
        <button aria-label="Favorites" className="flex h-[29px] w-[30px] items-center justify-center border-y border-r border-[#c3c6ca] bg-[#eceef1]">
          <Icon w={18}>
            <path d="M1 16V2.500h5l1.500 2H17V16z" fill="#fde6b8" stroke="#b9862f" />
            <path d="M9 6.500v7M5.500 10h7M6.500 7.500l5 5M11.500 7.500l-5 5" stroke="#1b4f78" />
          </Icon>
        </button>
      </div>
      <div className="flex min-h-0 flex-1 flex-col border-t border-r-[3px] border-b-2 border-l border-[#c3c6ca] border-r-[#b4b6b8]">
        <div className="flex h-[27px] items-center pr-[3px] pl-5">
          <h2 className="flex-1 text-[11px] font-bold text-[#444]">Model Tree</h2>
          <button aria-label="Settings" className="mr-2.5 flex items-center gap-2">
            <Icon w={18} h={20}>
              <path d="M1 2h8l2 2v2H8V5H2z" fill="#666" stroke="#444" />
              <path d="M4 6h3v13H4z" fill="#f0c583" stroke="#94692b" />
              <path d="M14 1v9" stroke="#777" strokeWidth="1.500" />
              <path d="M12.500 10h3.500v9h-3.500z" fill="#f0c583" stroke="#94692b" />
            </Icon>
            <Caret />
          </button>
          <button aria-label="Show" className="flex items-center gap-2">
            <Icon w={17} h={19}>
              <path d="M1 0.500h11l4 4v14H1z" fill="#fafafa" stroke="#888" />
              <path d="M12 0.500v4h4" stroke="#888" />
              <path d="M4 6h2M8 6h5M4 9.500h2M8 9.500h5M4 13h2M8 13h5" stroke="#666" strokeWidth="1.300" />
            </Icon>
            <Caret />
          </button>
        </div>
        <div className="flex h-[26px] items-center pl-1">
          <div className="flex h-[22px] w-[145px] shrink-0 items-center border border-[#b9bcc0] bg-white">
            <input aria-label="Search model tree" className="h-full min-w-0 flex-1 bg-transparent px-1 outline-none" />
            <button aria-label="Clear search" className="px-1">
              <Icon w={10}>
                <path d="M1.500 1.500l7 7M8.500 1.500l-7 7" stroke="#777" strokeWidth="1.300" />
              </Icon>
            </button>
          </div>
          <button aria-label="Search options" className="ml-1.5">
            <Caret />
          </button>
          <button aria-label="Find" className="ml-2">{binoculars}</button>
          <button aria-label="Filter" className="ml-2.5">
            <Icon w={16}>
              <path d="M0.500 1.500h15L10 8v5l-3.500 2.500V8z" fill="#fafafa" stroke="#aaa" />
            </Icon>
          </button>
          <button aria-label="Add" className="ml-3">
            <Icon w={12}>
              <path d="M6 0.500v11M0.500 6h11" stroke="#8b8b8b" strokeWidth="3" />
            </Icon>
          </button>
        </div>
        <div className="mt-[3px] flex min-h-0 flex-1 border-t border-[#c9ccd0] pt-1.5 pr-0.5">
          <ul className="min-w-0 flex-1 overflow-hidden text-[#444]">
            <li className="flex h-5 items-center gap-[7px] pl-[11px]">
              {asmIcon}
              MAIN_ASSEMBLY.ASM
            </li>
            {TREE.map((node, i) => (
              <li key={i} className="flex h-5 items-center pl-4">
                <span className="w-[15px] shrink-0">
                  {node.asm && (
                    <Icon w={8} h={10}>
                      <path d="M0.500 0.500v9L8 5z" fill="#8a8a8a" />
                    </Icon>
                  )}
                </span>
                <span className="w-[22px] shrink-0">{node.asm ? asmIcon : partIcon}</span>
                {node.mark && <MarkIcon mark={node.mark} />}
                {node.label}
              </li>
            ))}
          </ul>
          <div className="flex w-[17px] shrink-0 flex-col border-x border-[#c3c6ca] bg-[#f3f3f3]">
            <button aria-label="Scroll up" className="flex h-[18px] items-center justify-center border-y border-[#c3c6ca] bg-[#e6e6e6]">
              <span className="rotate-180"><Caret /></span>
            </button>
            <div className="flex flex-1 items-center justify-center border-b border-[#c3c6ca] bg-gradient-to-r from-white to-[#dcdcdc]">
              <Icon w={8} h={11}>
                <path d="M0 1.500h8M0 4.500h8M0 7.500h8M0 10.500h8" stroke="#aaa" />
              </Icon>
            </div>
            <div className="h-[30px]" />
            <button aria-label="Scroll down" className="flex h-[17px] items-center justify-center border-t border-[#c3c6ca] bg-[#e6e6e6]">
              <Caret />
            </button>
          </div>
        </div>
      </div>
    </aside>
  );
}

/* ---------- graphics area ---------- */

const VIEW_TOOLS: { name: string; icon: ReactNode; drop?: boolean }[] = [
  { name: "Refit", icon: refitIcon },
  { name: "Zoom In", icon: lens(<path d="M4.500 7h5M7 4.500v5" stroke="#17577c" strokeWidth="1.800" />) },
  { name: "Zoom Out", icon: lens(<path d="M4.500 7h5" stroke="#17577c" strokeWidth="1.800" />) },
  { name: "Repaint", icon: repaintIcon },
  { name: "Display Style", icon: styleIcon, drop: true },
  { name: "Saved Orientations", icon: savedIcon, drop: true },
  { name: "View Manager", icon: viewMgrIcon },
  { name: "Datum Display Filters", icon: datumIcon, drop: true },
];

function ViewToolbar() {
  return (
    <div className="flex h-7 border border-[#c3c6ca] bg-[#fdfdfd]">
      <span className="w-1 bg-[#ececec]" />
      {VIEW_TOOLS.map(({ name, icon, drop }) => (
        <button key={name} aria-label={name} className="relative flex w-[27px] items-center justify-center border-l border-[#d0d3d6]">
          {icon}
          {drop && (
            <span className="absolute right-0.5 bottom-0.5">
              <svg width="4" height="4" viewBox="14 14 4 4">{corner}</svg>
            </span>
          )}
        </button>
      ))}
      {[annotIcon, spinIcon].map((icon, i) => (
        <button key={i} aria-label={i === 0 ? "Annotation Display" : "Spin Center"} className="flex w-7 items-center justify-center border-l border-[#d0d3d6]">
          <span className="flex h-6 w-6 items-center justify-center border border-t-2 border-[#a9a9a9] bg-[#e2e2e4]">{icon}</span>
        </button>
      ))}
      <span className="w-1 border-l border-[#d0d3d6] bg-[#ececec]" />
    </div>
  );
}

function Pin({ x, y, r = 4, fill = "#5a5a5e" }: { x: number; y: number; r?: number; fill?: string }) {
  return <ellipse cx={x} cy={y} rx={r * 0.85} ry={r} fill={fill} transform={`rotate(25 ${x} ${y})`} />;
}

// a shaded cylinder is a few strokes of falling width
function Rod({ d, w, dark, mid, light }: { d: string; w: number; dark: string; mid: string; light: string }) {
  return (
    <g fill="none">
      <path d={d} stroke="#1a1a1a" strokeWidth={w + 1} />
      <path d={d} stroke={dark} strokeWidth={w} />
      <path d={d} stroke={mid} strokeWidth={w * 0.7} />
      <path d={d} stroke={light} strokeWidth={w * 0.25} />
    </g>
  );
}

const RED = { dark: "#6e0000", mid: "#9c0606", light: "#c02222" };
const STEEL = { dark: "#8d8d90", mid: "#c3c3c6", light: "#e8e8ec" };
const GREY = { dark: "#5d5d5d", mid: "#808080", light: "#999" };

function Excavator() {
  return (
    <svg viewBox="252 198 1089 490" className="min-h-0 w-full flex-1" role="img" aria-label="Excavator arm assembly">
      <g stroke="#161600" strokeWidth="0.9" strokeLinejoin="round">
        {/* far boom plate */}
        <path d="M742 356L843 276 850 283 870 292 770 370 730 385z" fill="#686800" />
        <path d="M742 356L838 277Q845 273 848 281L752 356z" fill="#dede18" />

        {/* dipper cylinder */}
        <Rod d="M912 312L941 384" w={14} dark="#5e0000" mid="#820303" light="#8f0a0a" />
        <Rod d="M932 371L944 391" w={17} dark="#5e0000" mid="#820303" light="#980c0c" />

        {/* dipper */}
        <path d="M836 247Q834 234 846 230L860 234 897 252 880 262 848 268Q838 262 836 247z" fill="#d0d014" />
        <path d="M842 249Q840 237 850 235L896 253 880 262 848 262z" fill="#7c7c00" />
        <path d="M847 268L862 276 940 505 920 502 865 340z" fill="#8d8d00" />
        <path d="M848 256Q848 243 860 241L911 264Q914 266 914 271L910 354 956 497 937 512 872 327 853 272Q847 264 848 256z" fill="#6a6a00" />
        <path d="M848 262Q846 241 862 241L870 245Q852 240 852 262L856 276z" fill="#dcdc20" />
        <circle cx="849" cy="243" r="7" fill="#dcdce2" stroke="#777" />

        {/* boom cylinder */}
        <Rod d="M847 256L794 342" w={9} {...STEEL} />
        <path d="M791 333L803 338 796 352 780 357Z" fill="#a90a0a" />
        <path d="M794 335L785 354" stroke="#d84a4a" strokeWidth="2" />

        {/* near boom plate */}
        <path d="M697 412L700 382Q704 366 716 363L746 356 790 362 768 374 718 434z" fill="#6c6c00" />
        <path d="M697 412L700 382Q704 366 716 363L746 356 748 359 718 367Q706 370 704 384L701 415z" fill="#d3d312" />
        <path d="M720 431L770 370 870 288Q880 281 888 286 896 292 891 303L867 341 788 457 622 630 607 610z" fill="#666600" />
        <path d="M718 434L766 368 866 289Q880 278 889 287 880 284 872 292L772 374z" fill="#e6e610" />
        <path d="M717 430L719 396Q722 380 734 376L770 371 768 374 737 380Q725 384 723 398L720 431z" fill="#d8d812" />
        <path d="M587 584L643 490 702 419 720 434 608 611z" fill="#d9d900" />
        <circle cx="723" cy="383" r="7" fill="#dcdce2" stroke="#777" />
        <Rod d="M722 386L690 428" w={10} {...STEEL} />
        <Rod d="M688 431L576 554" w={14} {...RED} />
        <Rod d="M690 425L677 439" w={19} {...RED} />

        {/* base bracket */}
        <path d="M511 636Q512 629 520 626L552 618 564 624 564 646 545 649Q510 650 511 636z" fill="#b9b900" />
        <path d="M511 636Q512 648 545 648L568 645 568 657 532 656Q509 652 511 641z" fill="#9a9a00" />
        <path d="M531 648V656M546 648V657" />
        <path d="M538 600H565V624L553 618 538 622z" fill="#5f5f00" />
        <path d="M526 600H540V640Q533 644 526 640z" fill="#77777d" stroke="#555" />
        <path d="M530 601V640" stroke="#a3a3a8" strokeWidth="3" />
        <path d="M516 583Q516 572 526 568L550 561 588 582 592 588 552 595 537 596Q516 594 516 583z" fill="#adad00" />
        <path d="M516 583Q517 595 537 596L552 595 590 584 592 588 572 597 572 603H537Q515 600 516 591z" fill="#9c9c00" />
        <path d="M537 596V603M552 595V603" />
        <path d="M572 596L592 588 607 610 621 630Q622 640 613 643L568 657 565 646z" fill="#666600" />
        <path d="M566 603H572L568 657 562 646z" fill="#c5c510" />
        <ellipse cx="536" cy="585" rx="7" ry="4" fill="#8c8c92" />
        <path d="M546 573L562 547Q568 541 574 544L576 548 566 572 548 576z" fill="#7b7b00" />
        <path d="M544 574L560 548Q566 541 572 543 566 546 562 552L548 576z" fill="#dcdc10" />
        <circle cx="572" cy="554" r="8" fill="#9d0707" stroke="#560000" />
        <path d="M564 586L582 558Q592 552 593 563L583 582z" fill="#727200" />
        <path d="M560 585L578 559Q584 553 590 556 584 558 581 562L564 587z" fill="#dcdc10" />
        <Pin x={587} y={565} r={4} />
        <Pin x={613} y={636} r={5} />
        <Pin x={738} y={392} />
        <Pin x={720} y={494} />
        <Pin x={861} y={254} />
        <Pin x={898} y={279} />
        <Pin x={881} y={299} fill="#e8e820" />

        {/* bucket linkage */}
        <g fill="none">
          <path d="M940 453Q955 439 968 453" stroke="#04045c" strokeWidth="14" />
          <path d="M941 452Q955 440 967 452" stroke="#0b0b92" strokeWidth="11" />
          <path d="M944 449Q955 440 964 447" stroke="#1c1cb4" strokeWidth="3" />
        </g>
        <Rod d="M944 392L975 456" w={10} {...GREY} />
        <path d="M971 454L981 452 990 462 976 468z" fill="#808080" />
        <g fill="none" stroke="#04045c">
          <path d="M964 472L958 499M986 472L977 500" strokeWidth="13" />
          <path d="M953 499H981" strokeWidth="6" />
          <path d="M943 488C950 468 968 457 991 470" strokeWidth="15" strokeLinecap="round" />
        </g>
        <g fill="none" stroke="#0b0b92">
          <path d="M964 472L958 499M986 472L977 500" strokeWidth="10" />
          <path d="M943 488C950 468 968 457 991 470" strokeWidth="12" strokeLinecap="round" />
        </g>
        <path d="M947 478C954 466 968 460 982 463" fill="none" stroke="#1c1cb4" strokeWidth="3" />
        <path d="M972 474L975 474 970 495 967 494z" fill="#fdfdfd" stroke="none" />
        <Pin x={943} y={489} r={4} fill="#55557c" />
        <Pin x={991} y={471} r={4} fill="#77779a" />

        {/* bucket */}
        <path d="M905 490L920 492 980 535 958 533z" fill="#a5a500" />
        <path d="M942 516V503Q943 497 949 498L978 504 981 508 973 528 958 524z" fill="#6c6c00" />
        <path d="M942 516V503Q943 497 949 498L978 504 950 502Q945 502 946 518z" fill="#c0c010" />
        <Pin x={948} y={505} r={3} />
        <Pin x={975} y={508} r={3} />
        <path d="M958 532L972 528 980 536Q981 562 974 582 968 602 955 600L902 590z" fill="#666600" />
        <path d="M905 490L958 532 904 588 850 547z" fill="#dada18" />
        <path d="M906 494L923 508Q926 528 918 546L907 556 854 545z" fill="#666600" />
        <path d="M923 508L953 532 918 566 907 556 918 546Q926 528 923 508z" fill="#c4c40c" />
        <path d="M920 537L937 548M916 546L928 556" />
        <path d="M918 546L928 556 918 566 907 556z" fill="#e2e210" />
        <path d="M854 546L907 556 918 566 904 582z" fill="#7f7f00" />
        <g fill="#9c9c10">
          <path d="M837 548L852 545 858 549 846 554z" />
          <path d="M847 555L860 551 865 556 855 560z" />
          <path d="M858 563L871 559 876 564 866 569z" />
          <path d="M868 571L881 567 886 572 877 577z" />
          <path d="M877 579L890 575 895 580 886 585z" />
          <path d="M887 586L898 581 904 588 900 591z" />
        </g>
      </g>

      <text
        transform="translate(743 471) rotate(-51)"
        className="fill-[#666600] stroke-[#161600] font-[Liberation_Serif,serif] text-[27px]"
        strokeWidth="0.8"
      >
        Ritesh Parmar
      </text>

      {/* spin centre */}
      <path d="M784 440V452L795 450M784 452L791 458" stroke="#3fae3f" fill="none" />
      <circle cx="784" cy="439" r="3" fill="#23d423" />
      <circle cx="795" cy="450" r="2" fill="#f05a50" />
      <circle cx="791" cy="459" r="3" fill="#2ee6e6" />

      <g className="fill-[#f6f6f0] font-light [filter:drop-shadow(1px_1px_0_#666)]">
        <text x="405" y="381" className="font-[Noto_Sans_CJK_SC,sans-serif] text-[54px]">莫西网</text>
        <g className="font-[Liberation_Serif,serif] text-[46px]">
          <text x="568" y="378">www.</text>
          <text x="686" y="378">3dmox.</text>
          <text x="856" y="378">com</text>
        </g>
      </g>
    </svg>
  );
}

/* ---------- status bar ---------- */

function Divider() {
  return <span className="h-full w-px bg-[#d6d6d6]" />;
}

function StatusBar() {
  return (
    <footer className="flex h-[35px] shrink-0 items-center border-t-2 border-[#8f8f8f] bg-[#efefef]">
      <div className="flex h-full items-end gap-1 pl-1.5">
        <button aria-label="Navigator" className="flex h-6 w-[22px] items-center justify-center border border-[#a3a3a3] bg-[#e4e4e4]">{treeGlyph}</button>
        <button aria-label="Browser" className="flex h-6 w-[22px] items-center justify-center border border-[#c0c0c0] bg-[#f5f5f5]">
          <Icon w={18}>
            <circle cx="9" cy="9" r="6.500" fill="#2d86bd" />
            <path d="M5 7c2-3 5-3 6-1s-3 4-4 6c-2 0-3-3-2-5z" fill="#9bd8f3" />
            <ellipse cx="9" cy="9" rx="9" ry="4" stroke="#2a5e86" transform="rotate(-40 9 9)" />
          </Icon>
        </button>
      </div>
      <div className="ml-2 h-full"><span className="block h-full w-px bg-[#d6d6d6]" /></div>
      <div className="flex-1" />
      <div className="flex h-full w-[276px] items-center">
        <Divider />
        <span className="w-[27px]" />
        <Divider />
        <div className="flex w-[77px] items-center gap-0.5 pl-1.5">
          <span className="h-[11px] w-[11px] rounded-full bg-[#46c84e]" />
          <span className="h-1.5 w-1.5 rounded-full bg-[#bcbcbc]" />
          <span className="h-1.5 w-1.5 rounded-full bg-[#bcbcbc]" />
          <span className="mx-0.5 h-6 w-px bg-[#d6d6d6]" />
          <Icon w={14} h={18}>
            <path d="M2 1v16" stroke="#9b9b9b" strokeWidth="1.500" />
            <path d="M2.500 1.500L13 4.500 2.500 9z" fill="#a5a5a5" />
          </Icon>
        </div>
        <Divider />
        <button aria-label="Find" className="ml-[3px] flex h-7 w-10 items-center justify-center rounded-sm border border-[#b5b5b5] bg-gradient-to-b from-white to-[#e9e9e9]">{binoculars}</button>
        <button aria-label="Selection buffer" className="ml-1.5 flex h-7 w-10 items-center justify-center rounded-sm border border-[#b5b5b5] bg-gradient-to-b from-white to-[#e9e9e9]">
          <Icon w={19}>
            <path d="M1.500 5L5 1.500h12.500v12L13.500 17.500h-12zM1.500 5h12v12.500M13.500 5l4-3.500" stroke="#333" fill="#fff" />
            <path d="M5 8h4v6H5z" fill="#f7cf8d" />
            <path d="M6.500 7h5v5h-5z" fill="#5bb9e4" stroke="#256d95" />
          </Icon>
        </button>
      </div>
      <div className="ml-4 flex h-[22px] w-[147px] overflow-hidden border-y border-l border-[#b5b5b5] bg-gradient-to-b from-white to-[#f0f0f0]">
        <select aria-label="Selection filter" className="w-[138px] shrink-0 appearance-none border-r border-[#c3c3c3] bg-transparent pl-[7px] outline-none">
          <option>Smart</option>
        </select>
        <span className="flex items-center pl-1">
          <Caret />
        </span>
      </div>
    </footer>
  );
}

export default function App() {
  return (
    <div className="flex h-screen flex-col overflow-hidden bg-[#fdfdfd] font-[Liberation_Sans,Arial,sans-serif] text-[11px] text-[#3c3c3c]">
      <Header />
      <main className="flex min-h-0 flex-1">
        <ModelTree />
        <div className="flex min-w-0 flex-1 flex-col pt-[7px]">
          <div className="flex justify-center pl-[18px]">
            <ViewToolbar />
          </div>
          <Excavator />
        </div>
      </main>
      <StatusBar />
    </div>
  );
}
